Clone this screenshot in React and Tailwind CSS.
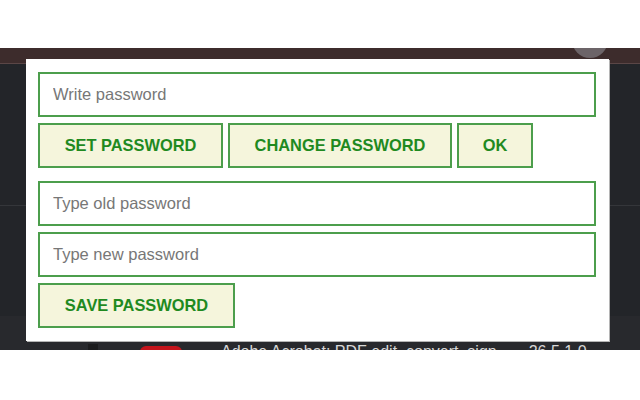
import React from "react";

const font = { fontFamily: '"Liberation Sans", Arial, sans-serif' };

function Field({ placeholder }) {
  return (
    <input
      placeholder={placeholder}
      className="block w-full h-[45px] border-2 border-[#4c9e4c] bg-white px-[13px] text-[16.5px] text-[#333] placeholder:text-[#777] outline-none"
      style={font}
    />
  );
}

function Btn({ children, w }) {
  return (
    <button
      className={`h-[45px] ${w} border-2 border-[#4c9e4c] bg-[#f5f5dc] text-[16.4px] font-bold text-[#1f8a1f] shrink-0`}
      style={font}
    >
      {children}
    </button>
  );
}

export default function App() {
  return (
    <div className="w-[640px] h-[400px] bg-white flex flex-col overflow-hidden" style={font}>
      <div className="h-[48px] bg-white shrink-0" />
      <div className="relative h-[302px] shrink-0 bg-[#232529] overflow-hidden flex flex-col">
        <div className="h-[16px] bg-[#3d2c2c] border-b border-[#5a4646] shrink-0" />
        <div className="h-[142px] shrink-0 border-b border-[#34363a]" />
        <div className="h-[110px] shrink-0" />
        <div className="flex-1 bg-[#28292d] flex items-start pt-[28px]">
          <div className="w-[88px]" />
          <div className="w-[10px] h-[14px] bg-[#1c1c1e]" />
          <div className="w-[42px]" />
          <div className="w-[42px] h-[16px] mt-[2px] rounded-[6px] bg-[#c4141c]" />
          <div className="w-[39px]" />
          <div className="text-[16px] text-[#d8d8d8] leading-none">Adobe Acrobat: PDF edit, convert, sign</div>
          <div className="ml-[32px] text-[16px] text-[#d8d8d8] leading-none">26.5.1.0</div>
        </div>
        {/* avatar circle behind panel */}
        <div className="absolute left-[572px] top-[-26px] w-[36px] h-[36px] rounded-full bg-[#6c6468]" />
        {/* popup panel */}
        <div className="absolute left-[26px] top-[11px] w-[583px] h-[282px] bg-white shadow-[1px_1px_0_#b5b5b5] px-[12px] pt-[13px] flex flex-col">
          <div className="w-[558px]">
            <Field placeholder="Write password" />
          </div>
          <div className="flex mt-[6px] gap-[5px]">
            <Btn w="w-[185px]">SET PASSWORD</Btn>
            <Btn w="w-[224px]">CHANGE PASSWORD</Btn>
            <Btn w="w-[76px]">OK</Btn>
          </div>
          <div className="w-[558px] mt-[13px]">
            <Field placeholder="Type old password" />
          </div>
          <div className="w-[558px] mt-[6px]">
            <Field placeholder="Type new password" />
          </div>
          <div className="flex mt-[6px]">
            <Btn w="w-[197px]">SAVE PASSWORD</Btn>
          </div>
        </div>
      </div>
      <div className="flex-1 bg-white" />
    </div>
  );
}
